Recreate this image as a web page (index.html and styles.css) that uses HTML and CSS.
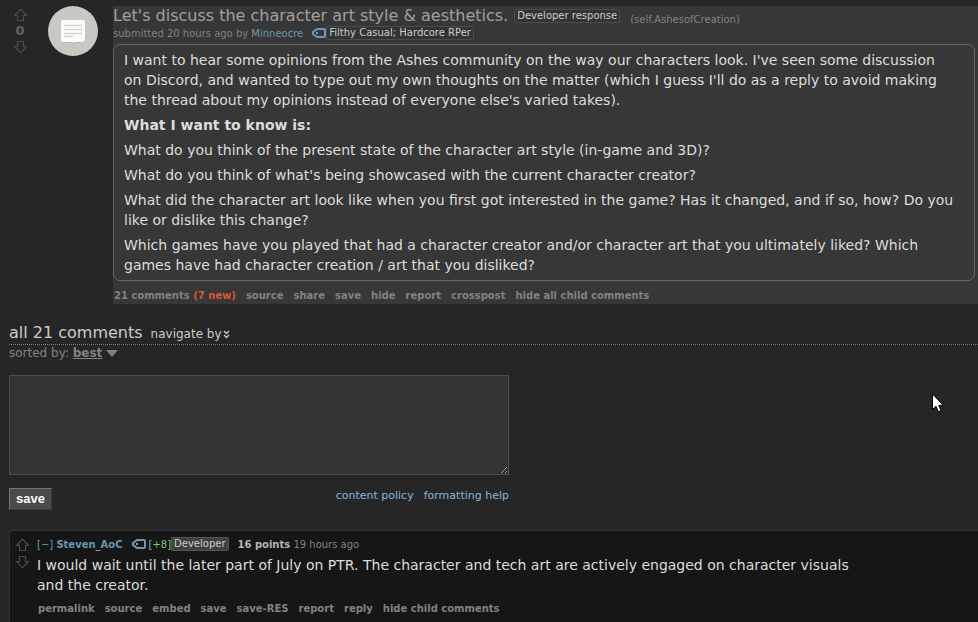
FILE: index.html
```html
<!DOCTYPE html>
<html lang="en">
<head>
    <meta charset="UTF-8">
    <meta name="viewport" content="width=device-width, initial-scale=1.0">
    <title>Let's discuss the character art style &amp; aesthetics. : AshesofCreation</title>
    <link rel="stylesheet" href="styles.css">
</head>
<body>
    <svg class="defs" width="0" height="0" aria-hidden="true">
        <symbol id="arrow" viewBox="0 0 15 14">
            <path d="M7.5 1.2L13.3 7.5H10.5V12.5H4.5V7.5H1.7Z" fill="none" stroke="currentColor" stroke-width="1.2"/>
        </symbol>
        <symbol id="tag" viewBox="0 0 14 10">
            <path d="M5 1H12Q13 1 13 2V8Q13 9 12 9H5L1 6V4Z" fill="none" stroke="currentColor" stroke-width="2"/>
            <rect x="4" y="4" width="2" height="2" fill="currentColor"/>
        </symbol>
    </svg>

    <article class="post">
        <div class="votes">
            <button class="vote" aria-label="upvote"><svg width="15" height="14"><use href="#arrow"/></svg></button>
            <div class="score">0</div>
            <button class="vote down" aria-label="downvote"><svg width="15" height="14"><use href="#arrow"/></svg></button>
        </div>
        <a href="#" class="thumbnail" aria-label="self post">
            <svg width="50" height="50" viewBox="0 0 50 50">
                <circle cx="25" cy="25" r="25" fill="#c8c9c3"/>
                <path d="M15 15H35Q37 15 37 17V35Q37 37 35 37H27L25 39L23 37H15Q13 37 13 35V17Q13 15 15 15Z" fill="#b8b9b3"/>
                <path d="M15 14H35Q37 14 37 16V34Q37 36 35 36H26L25 37L24 36H15Q13 36 13 34V16Q13 14 15 14Z" fill="#fcfcfa"/>
                <path d="M16 19.5H34M16 23.5H34M16 27.5H34M16 30.5H25" stroke="#d3d3ce" stroke-width="1.3"/>
            </svg>
        </a>
        <div class="entry">
            <div class="title-row">
                <h1 class="title"><a href="#">Let's discuss the character art style &amp; aesthetics.</a></h1>
                <span class="flair">Developer response</span>
                <a href="#" class="domain">(self.AshesofCreation)</a>
            </div>
            <div class="tagline">
                <span>submitted 20 hours ago by <a href="#" class="author">Minneocre</a></span>
                <a href="#" class="tag" aria-label="tag user"><svg width="14" height="10"><use href="#tag"/></svg></a>
                <span class="flair">Filthy Casual; Hardcore RPer</span>
            </div>
            <div class="post-body">
                <p>I want to hear some opinions from the Ashes community on the way our characters look. I've seen some discussion on Discord, and wanted to type out my own thoughts on the matter (which I guess I'll do as a reply to avoid making the thread about my opinions instead of everyone else's varied takes).</p>
                <p><strong>What I want to know is:</strong></p>
                <p>What do you think of the present state of the character art style (in-game and 3D)?</p>
                <p>What do you think of what's being showcased with the current character creator?</p>
                <p>What did the character art look like when you first got interested in the game? Has it changed, and if so, how? Do you like or dislike this change?</p>
                <p>Which games have you played that had a character creator and/or character art that you ultimately liked? Which games have had character creation / art that you disliked?</p>
            </div>
            <nav class="buttons">
                <a href="#">21 comments <span class="new">(7 new)</span></a>
                <a href="#">source</a>
                <a href="#">share</a>
                <a href="#">save</a>
                <a href="#">hide</a>
                <a href="#">report</a>
                <a href="#">crosspost</a>
                <a href="#">hide all child comments</a>
            </nav>
        </div>
    </article>

    <section class="comments">
        <div class="comments-head">
            <h2>all 21 comments</h2>
            <a href="#" class="navigate">navigate by
                <svg width="7" height="9" viewBox="0 0 7 9"><path d="M1 1L3.5 3.5L6 1M1 5L3.5 7.5L6 5" fill="none" stroke="currentColor" stroke-width="1.3"/></svg>
            </a>
        </div>
        <div class="sort">sorted by: <button class="sort-button"><span>best</span><svg width="12" height="7" viewBox="0 0 12 7"><path d="M0 0H12L6 7Z" fill="currentColor"/></svg></button></div>

        <form class="reply-form">
            <textarea aria-label="comment"></textarea>
            <div class="form-bottom">
                <button type="button" class="save">save</button>
                <div class="help">
                    <a href="#">content policy</a>
                    <a href="#">formatting help</a>
                </div>
            </div>
        </form>

        <article class="comment">
            <div class="votes">
                <button class="vote" aria-label="upvote"><svg width="15" height="14"><use href="#arrow"/></svg></button>
                <button class="vote down" aria-label="downvote"><svg width="15" height="14"><use href="#arrow"/></svg></button>
            </div>
            <div class="comment-entry">
                <div class="tagline">
                    <span><a href="#" class="author">[−]</a> <a href="#" class="author bold">Steven_AoC</a></span>
                    <a href="#" class="tag" aria-label="tag user"><svg width="14" height="10"><use href="#tag"/></svg></a>
                    <a href="#" class="weight">[+8]</a>
                    <span class="flair developer">Developer</span>
                    <span class="points"><b>16 points</b> 19 hours ago</span>
                </div>
                <p class="comment-text">I would wait until the later part of July on PTR. The character and tech art are actively engaged on character visuals and the creator.</p>
                <nav class="buttons">
                    <a href="#">permalink</a>
                    <a href="#">source</a>
                    <a href="#">embed</a>
                    <a href="#">save</a>
                    <a href="#">save-RES</a>
                    <a href="#">report</a>
                    <a href="#">reply</a>
                    <a href="#">hide child comments</a>
                </nav>
            </div>
        </article>
    </section>

    <svg class="pointer" width="12" height="20" viewBox="0 0 12 20" aria-hidden="true">
        <path d="M.5 1V16.5L4 13.2L6.3 18.7L9 17.5L6.7 12.3H11.3Z" fill="#fff" stroke="#000"/>
    </svg>
</body>
</html>
```

FILE: styles.css
```css
* {
    box-sizing: border-box;
}
body {
    margin: 0;
    background-color: #262626;
    color: #828282;
    font-family: Verdana, "DejaVu Sans", sans-serif;
    font-size: 10px;
    position: relative;
    overflow-x: hidden;
}
a {
    color: inherit;
    text-decoration: none;
}
button {
    border: none;
    padding: 0;
    background: none;
    font-family: inherit;
    cursor: pointer;
}
svg {
    display: block;
}
h1,
h2,
p {
    margin: 0;
    font-weight: normal;
}
.defs {
    position: absolute;
}
.post {
    display: flex;
    padding-top: 6px;
}
.votes {
    display: flex;
    flex-direction: column;
    align-items: center;
    flex-shrink: 0;
}
.post .votes {
    width: 40px;
    padding-top: 2px;
}
.vote {
    color: #4c4c4c;
}
.vote.down {
    transform: rotate(180deg);
}
.score {
    color: #646464;
    font-size: 13px;
    font-weight: bold;
    line-height: 18px;
}
.thumbnail {
    flex-shrink: 0;
    width: 50px;
    margin: 0 15px 0 8px;
}
.entry {
    flex: 1;
    min-width: 0;
    background-color: #373737;
}
.title-row {
    display: flex;
    align-items: center;
    height: 20px;
}
.title {
    color: #a0a0a0;
    font-size: 16px;
    line-height: 20px;
    margin-right: 6px;
}
.flair {
    border: 1px solid #4c4c4c;
    border-radius: 2px;
    background-color: #333;
    color: #ccc;
    padding: 0 2px;
    line-height: 12px;
    white-space: nowrap;
}
.domain {
    margin: 6px 0 0 10px;
}
.tagline {
    display: flex;
    align-items: center;
    height: 14px;
    white-space: nowrap;
}
.author {
    color: #6a98af;
}
.bold {
    font-weight: bold;
}
.tag {
    color: #7396b8;
    margin-left: 9px;
}
.post-body {
    margin: 4px 3px 0 0;
    padding: 5px 19px 5px 10px;
    border: 1px solid #666;
    border-radius: 7px;
    color: #ddd;
    font-size: 14px;
    line-height: 20px;
}
.post-body p + p {
    margin-top: 5px;
}
.buttons {
    display: flex;
    gap: 10px;
    padding-left: 1px;
    font-weight: bold;
    line-height: 14px;
}
.post .buttons {
    padding-top: 8px;
    padding-bottom: 1px;
}
.new {
    color: #db5632;
}
.comments {
    padding: 18px 0 0 9px;
}
.comments-head {
    display: flex;
    align-items: baseline;
    gap: 8px;
    border-bottom: 1px dotted #808080;
    color: #ccc;
}
.comments-head h2 {
    font-size: 16px;
    line-height: 22px;
}
.navigate {
    display: flex;
    align-items: center;
    gap: 1px;
    font-size: 12px;
}
.sort {
    font-size: 12px;
    line-height: 16px;
}
.sort-button {
    display: inline-flex;
    align-items: center;
    gap: 4px;
    color: #828282;
    font-size: 12px;
    font-weight: bold;
}
.sort-button span {
    text-decoration: underline;
}
.reply-form {
    max-width: 500px;
    margin-top: 14px;
}
.reply-form textarea {
    display: block;
    width: 100%;
    height: 100px;
    border: 1px solid #4d4d4d;
    background-color: #333;
    color: #ddd;
    color-scheme: dark;
    font-family: inherit;
    font-size: 14px;
}
.form-bottom {
    display: flex;
    justify-content: space-between;
    align-items: flex-start;
    padding-top: 13px;
}
.save {
    padding: 0 6px;
    border: 1px solid #3a3a3a;
    border-top-color: #777;
    border-left-color: #777;
    background-color: #4a4a4a;
    color: #fff;
    font-family: Arial, "Liberation Sans", sans-serif;
    font-size: 13px;
    font-weight: bold;
    line-height: 20px;
}
.help {
    display: flex;
    gap: 10px;
    color: #8cb3d9;
    font-size: 11px;
    line-height: 16px;
}
.comment {
    display: flex;
    margin-top: 20px;
    padding: 6px 0 8px 5px;
    border: 1px solid #333;
    border-right: none;
    border-radius: 3px 0 0 0;
    background-color: #161616;
}
.comment .votes {
    gap: 3px;
    width: 15px;
    padding-top: 1px;
    margin-right: 7px;
}
.comment-entry {
    flex: 1;
    min-width: 0;
}
.weight {
    color: #7ec27e;
    margin-left: 3px;
}
.developer {
    border-color: #555;
    background-color: #404040;
}
.points {
    margin-left: 9px;
}
.points b {
    color: #b4b4b4;
}
.comment-text {
    max-width: 840px;
    margin: 4px 0 7px;
    color: #ddd;
    font-size: 14px;
    line-height: 20px;
}
.pointer {
    position: absolute;
    top: 393px;
    left: 932px;
}
```
